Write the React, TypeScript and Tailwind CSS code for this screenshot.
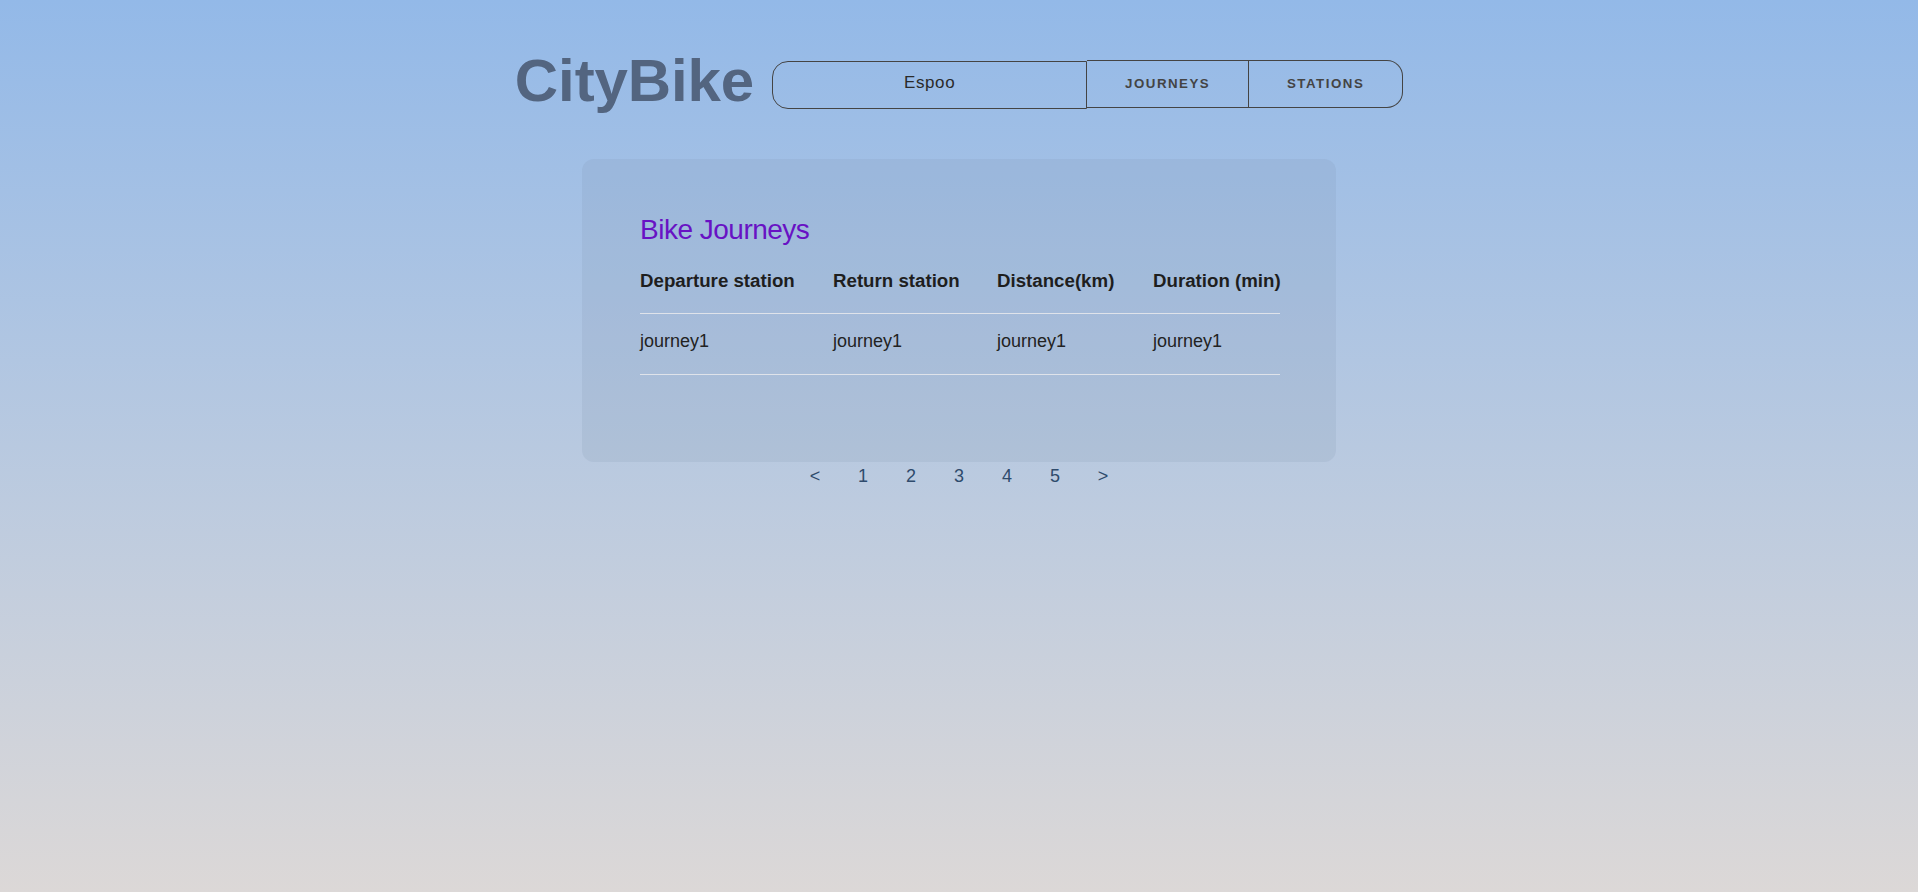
import React from "react";

const columns = ["Departure station", "Return station", "Distance(km)", "Duration (min)"];

const journeys = [
  { departure: "journey1", ret: "journey1", distance: "journey1", duration: "journey1" },
];

const pages = ["<", "1", "2", "3", "4", "5", ">"];

const gridCols = "grid grid-cols-[193px_164px_156px_127px]";

const App = () => {
  return (
    <div className="min-h-screen w-full bg-linear-to-b from-[#93b9e8] via-[#b8c9e0] to-[#dcd8d7] font-['Liberation_Sans',Arial,sans-serif]">
      <header className="flex items-center justify-center pt-[51px]">
        <h1 className="mb-[6px] mr-[18px] text-[60px] font-bold leading-[60px] tracking-[-0.1px] text-[#536580]">
          CityBike
        </h1>
        <nav className="flex items-center">
          <div className="mt-[1px] flex h-[48px] w-[315px] items-center justify-center rounded-l-[16px] border border-[#444] pb-[3px] text-[17px] tracking-[0.6px] text-[#2a2a2a]">
            Espoo
          </div>
          <button className="flex h-[48px] w-[162px] items-center justify-center border border-l-0 border-[#444] text-[13.3px] font-bold tracking-[1.5px] text-[#444]">
            JOURNEYS
          </button>
          <button className="flex h-[48px] w-[154px] items-center justify-center rounded-r-[16px] border border-l-0 border-[#444] text-[13.3px] font-bold tracking-[1.5px] text-[#444]">
            STATIONS
          </button>
        </nav>
      </header>

      <main className="mx-auto mt-[42px] w-[754px] rounded-[12px] bg-[rgba(120,140,170,0.15)] pl-[58px] pr-[56px] pt-[54px] pb-[87px]">
        <h2 className="text-[28px] leading-[34px] tracking-[-0.5px] text-[#6812c4]">Bike Journeys</h2>
        <div className={`${gridCols} mt-[20px] border-b border-[#dfe3ea] pb-[18px]`}>
          {columns.map((c) => (
            <div key={c} className="whitespace-nowrap text-[18.7px] font-bold leading-[28px] text-[#1e1e1e]">
              {c}
            </div>
          ))}
        </div>
        {journeys.map((j, i) => (
          <div key={i} className={`${gridCols} border-b border-[#dfe3ea] pt-[14px] pb-[19px] text-[18px] leading-[27px] text-[#222]`}>
            <div>{j.departure}</div>
            <div>{j.ret}</div>
            <div>{j.distance}</div>
            <div>{j.duration}</div>
          </div>
        ))}
      </main>

      <div className="mt-[1px] flex justify-center">
        {pages.map((p) => (
          <button key={p} className="w-[48px] text-center text-[18px] leading-[27px] text-[#2f4b6c]">
            {p}
          </button>
        ))}
      </div>
    </div>
  );
};

export default App;
